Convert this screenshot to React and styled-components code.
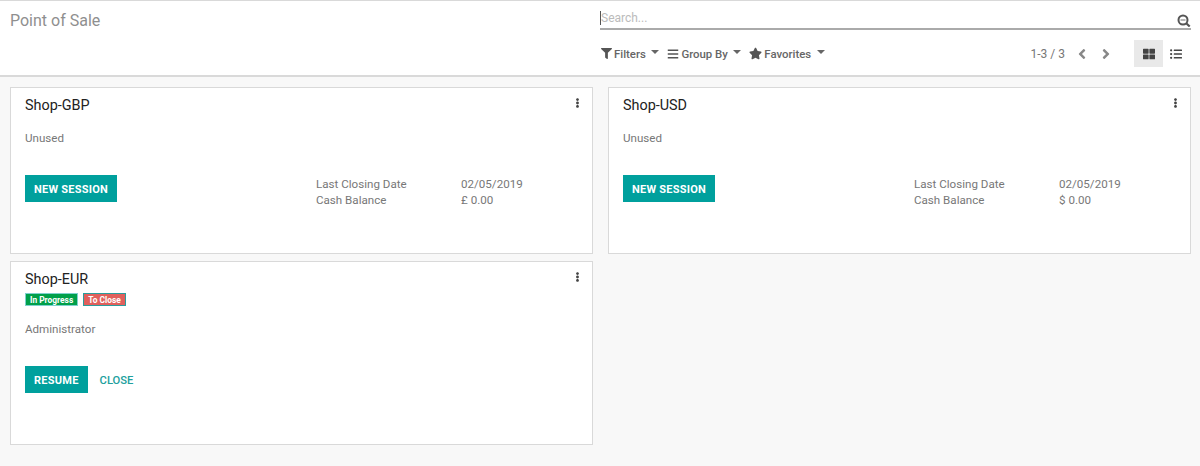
import React from 'react';
import styled, { createGlobalStyle } from 'styled-components';
import { FaFilter, FaBars, FaStar, FaAngleLeft, FaAngleRight, FaThLarge, FaListUl, FaEllipsisV } from 'react-icons/fa';

const Global = createGlobalStyle`
  html, body { margin: 0; padding: 0; height: 100%; background: #f8f8f8; }
  body { font-family: Roboto, "Noto Sans", sans-serif; font-size: 12px; color: #666; }
  * { box-sizing: border-box; }
`;
const Page = styled.div`width: 1200px; height: 466px; overflow: hidden; display: flex; flex-direction: column;`;
const Header = styled.header`
  height: 77px; background: #fff; border-top: 1px solid #d9d9d9; border-bottom: 2px solid #d9d9d9;
  display: grid; grid-template-columns: 600px 1fr; flex: none;
`;
const Title = styled.h1`margin: 0; padding: 10px 0 0 10px; font-size: 16px; line-height: 19px; font-weight: 400; color: #8f8f8f;`;
const Right = styled.div`display: flex; flex-direction: column; padding-right: 9px;`;
const SearchBar = styled.div`
  height: 29px; border-bottom: 2px solid #aaa; display: flex; align-items: flex-end; justify-content: space-between;
`;
const Placeholder = styled.span`border-left: 1px solid #555; font-size: 12px; line-height: 14px; color: #bbb; margin-bottom: 3px;`;
const SearchSvg = styled.svg`width: 14px; height: 13px; display: block; margin-bottom: 1px;`;
const Controls = styled.div`display: flex; align-items: center; margin-top: 10px; height: 27px;`;
const Menu = styled.button`
  display: flex; align-items: center; gap: 2px; border: 0; background: none; padding: 0 0 0 1px; margin-right: 7px;
  font: 500 11.4px Roboto, sans-serif; color: #666;
  svg { width: ${p => p.$w}px; height: ${p => p.$w}px; color: #555; }
`;
const Caret = styled.span`width: 0; height: 0; margin-left: 3.5px; margin-top: -3px; border: 4px solid transparent; border-top-color: #666; border-bottom: 0;`;
const Pager = styled.span`margin-left: auto; color: #777; font-size: 12px;`;
const Arrows = styled.div`
  display: flex; gap: 10px; margin: 0 21px 0 10px; color: #888;
  svg { width: 14px; height: 16px; display: block; }
`;
const Switch = styled.div`display: flex; margin-right: 2px;`;
const ViewBtn = styled.div`
  width: ${p => (p.$active ? 29 : 26)}px; height: 27px; display: flex; align-items: center; justify-content: center; color: #444;
  background: ${p => (p.$active ? '#e9e9e9' : 'transparent')};
  svg { width: 12px; height: 12px; }
`;
const Board = styled.main`
  flex: 1; padding: 10px 9px 0 10px; display: grid; grid-template-columns: 583px 583px; grid-template-rows: 167px 184px; gap: 7px 15px;
  align-content: start;
`;
const Card = styled.section`
  position: relative; background: #fff; border: 1px solid #d9d9d9; padding: 9px 14px;
`;
const CardTitle = styled.h2`margin: 0; font-size: 14.4px; line-height: 18px; font-weight: 400; color: #222;`;
const Dots = styled(FaEllipsisV)`position: absolute; top: 10px; right: 12px; width: 5px; height: 10px; color: #444;`;
const Badges = styled.div`display: flex; gap: 5px; margin-top: 4px;`;
const Badge = styled.span`
  height: 13px; padding: 0 4px; font-size: 8.4px; font-weight: 700; line-height: 12px; color: #fff;
  background: ${p => p.$bg}; border: 1px solid ${p => p.$line};
`;
const Note = styled.div`font-size: 11.6px; line-height: 14px; color: #777; margin-top: ${p => p.$top}px;`;
const Row = styled.div`display: flex; align-items: flex-start; margin-top: ${p => p.$top}px;`;
const Primary = styled.button`
  height: 27px; padding: 1px 8px 0; background: #00a09d; border: 1px solid #00a09d; color: #fff;
  font: 700 11px Roboto, sans-serif; letter-spacing: .25px;
`;
const Link = styled.button`
  height: 27px; margin-left: 3px; padding: 1px 9px 0; border: 0; background: none; color: #21a09d; font: 500 11.2px Roboto, sans-serif;
`;
const Stats = styled.dl`
  margin: 0 0 0 auto; width: 262px; display: grid; grid-template-columns: 145px 1fr; line-height: 16px; font-size: 11.6px; color: #777; padding-top: 1px;
  dt, dd { margin: 0; }
`;

const shops = [
  { name: 'Shop-GBP', sym: '£' },
  { name: 'Shop-USD', sym: '$' },
];

function SearchIcon() {
  return (
    <SearchSvg viewBox="0 0 14 13" aria-hidden="true">
      <circle cx="6" cy="6" r="4.5" fill="none" stroke="#555" strokeWidth="2" />
      <path d="M3.5 6h5" stroke="#999" strokeWidth="1.4" />
      <path d="M9.5 9.5l3.2 3" stroke="#555" strokeWidth="2.2" />
    </SearchSvg>
  );
}

export default function App() {
  return (
    <Page>
      <Global />
      <Header>
        <Title>Point of Sale</Title>
        <Right>
          <SearchBar>
            <Placeholder>Search...</Placeholder>
            <SearchIcon />
          </SearchBar>
          <Controls>
            <Menu $w={11}><FaFilter />Filters<Caret /></Menu>
            <Menu $w={12}><FaBars />Group By<Caret /></Menu>
            <Menu $w={13}><FaStar />Favorites<Caret /></Menu>
            <Pager>1-3 / 3</Pager>
            <Arrows><FaAngleLeft /><FaAngleRight /></Arrows>
            <Switch>
              <ViewBtn $active><FaThLarge /></ViewBtn>
              <ViewBtn><FaListUl /></ViewBtn>
            </Switch>
          </Controls>
        </Right>
      </Header>
      <Board>
        {shops.map(s => (
          <Card key={s.name}>
            <CardTitle>{s.name}</CardTitle>
            <Dots />
            <Note $top={16}>Unused</Note>
            <Row $top={30}>
              <Primary>NEW SESSION</Primary>
              <Stats>
                <dt>Last Closing Date</dt><dd>02/05/2019</dd>
                <dt>Cash Balance</dt><dd>{s.sym} 0.00</dd>
              </Stats>
            </Row>
          </Card>
        ))}
        <Card>
          <CardTitle>Shop-EUR</CardTitle>
          <Dots />
          <Badges>
            <Badge $bg="#00a04a" $line="#7fd0ce">In Progress</Badge>
            <Badge $bg="#e0605c" $line="#2a9d9d">To Close</Badge>
          </Badges>
          <Note $top={16}>Administrator</Note>
          <Row $top={30}>
            <Primary>RESUME</Primary>
            <Link>CLOSE</Link>
          </Row>
        </Card>
      </Board>
    </Page>
  );
}
